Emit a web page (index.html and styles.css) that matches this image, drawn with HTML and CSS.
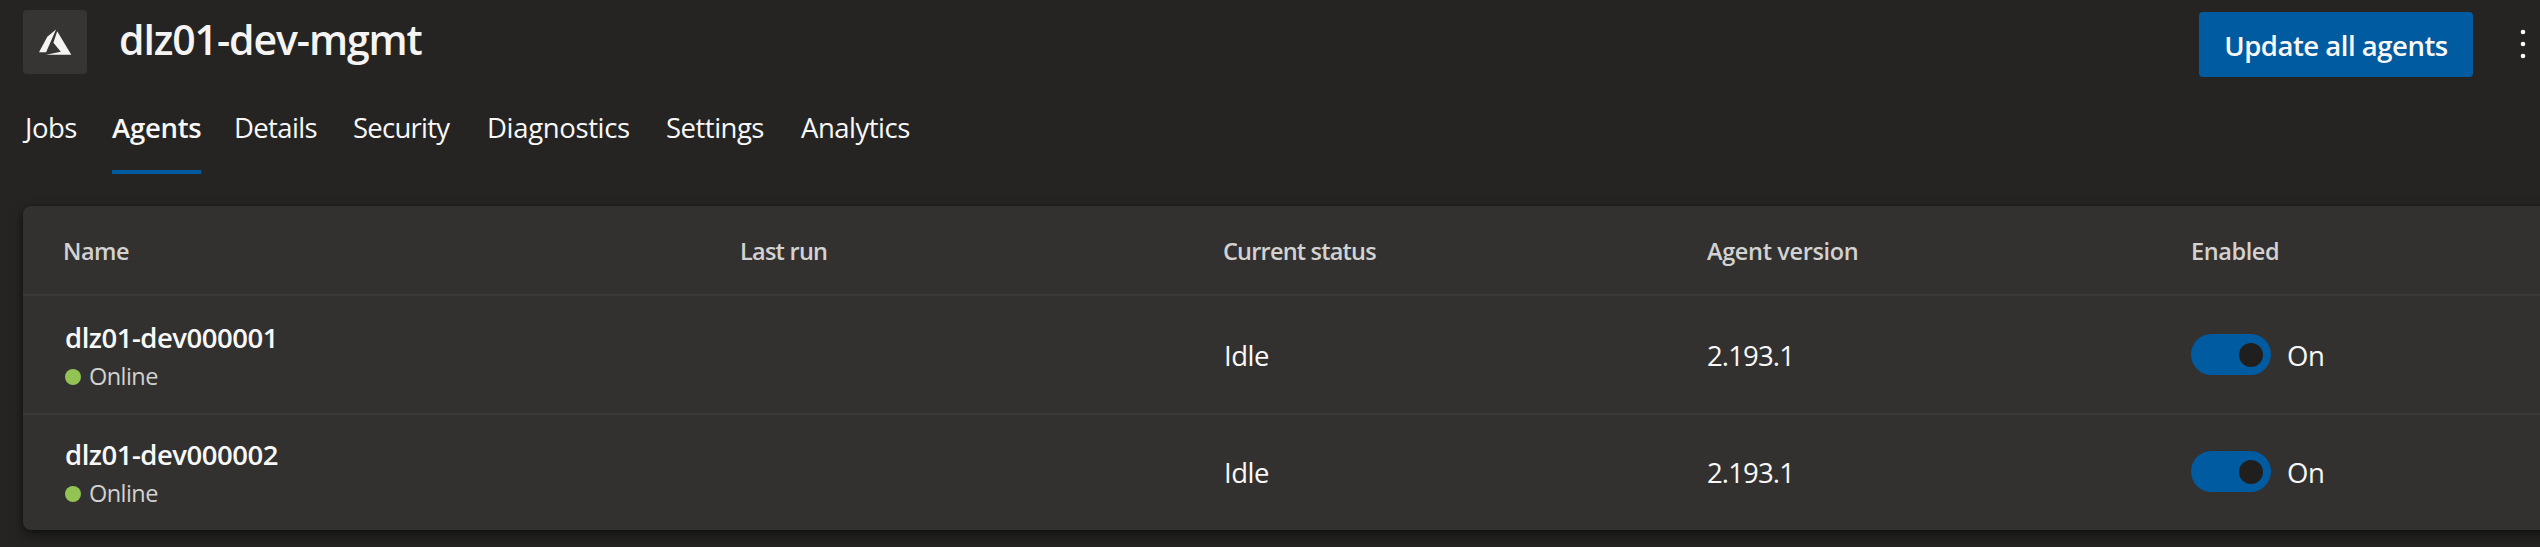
FILE: index.html
```
<!DOCTYPE html>
<html lang="en">
<head>
<meta charset="utf-8">
<title>dlz01-dev-mgmt - Agents</title>
<link rel="stylesheet" href="styles.css">
</head>
<body>
<div class="page">
  <header class="header">
    <div class="pool-icon">
      <svg width="34" height="27" viewBox="0 0 34 27" aria-hidden="true">
        <path fill="#f5f4f3" d="M18 .5 9.3 7.7 1 23.2h7.1z"/>
        <path fill="#f5f4f3" d="m19.2 2.3-3.8 11.5 7.4 9L8 25.7h25.3z"/>
      </svg>
    </div>
    <h1 class="title">dlz01-dev-mgmt</h1>
    <button class="update" type="button">Update all agents</button>
    <button class="more" type="button" aria-label="More actions">
      <svg width="6" height="30" viewBox="0 0 6 30"><g fill="#f8f8f8"><circle cx="3" cy="3" r="2.3"/><circle cx="3" cy="15" r="2.3"/><circle cx="3" cy="27" r="2.3"/></g></svg>
    </button>
  </header>
  <nav class="tabs">
    <a class="tab tab-jobs">Jobs</a>
    <a class="tab tab-agents active">Agents</a>
    <a class="tab tab-details">Details</a>
    <a class="tab tab-security">Security</a>
    <a class="tab tab-diagnostics">Diagnostics</a>
    <a class="tab tab-settings">Settings</a>
    <a class="tab tab-analytics">Analytics</a>
  </nav>
  <main class="card">
    <div class="grid head">
      <div class="h-name">Name</div>
      <div class="h-run">Last run</div>
      <div class="h-status">Current status</div>
      <div class="h-version">Agent version</div>
      <div class="h-enabled">Enabled</div>
    </div>
    <div class="grid row">
      <div class="agent">
        <div class="agent-name">dlz01-dev000001</div>
        <div class="agent-state"><span class="dot"></span><span>Online</span></div>
      </div>
      <div></div>
      <div class="value">Idle</div>
      <div class="value version">2.193.1</div>
      <div class="enabled"><span class="toggle"><span class="knob"></span></span><span class="value">On</span></div>
    </div>
    <div class="grid row last">
      <div class="agent">
        <div class="agent-name">dlz01-dev000002</div>
        <div class="agent-state"><span class="dot"></span><span>Online</span></div>
      </div>
      <div></div>
      <div class="value">Idle</div>
      <div class="value version">2.193.1</div>
      <div class="enabled"><span class="toggle"><span class="knob"></span></span><span class="value">On</span></div>
    </div>
  </main>
</div>
</body>
</html>
```
FILE: styles.css
```
* { box-sizing: border-box; }

body {
  margin: 0;
  background: #252423;
  color: #f8f8f8;
  font-family: "Open Sans", "Noto Sans", sans-serif;
  font-size: 27.5px;
}

.page {
  height: 547px;
  overflow: hidden;
  padding-left: 23px;
}

.header {
  display: flex;
  align-items: flex-start;
  height: 100px;
  padding-top: 10px;
}

.pool-icon {
  display: flex;
  width: 64px;
  height: 64px;
  padding: 19px 0 0 15px;
  border-radius: 4px;
  background: #363534;
}

.title {
  flex: 1;
  margin: 0 0 0 32px;
  font-size: 41px;
  font-weight: 600;
  line-height: 58px;
  letter-spacing: -1.1px;
  color: #f5f4f3;
}

.update {
  width: 274px;
  height: 65px;
  margin-top: 2px;
  padding: 2px 0 0;
  border: 0;
  border-radius: 4px;
  background: #005ba1;
  color: #f8f8f8;
  font: 600 27.5px/63px "Open Sans", "Noto Sans", sans-serif;
  letter-spacing: -0.48px;
}

.more {
  display: flex;
  width: 6px;
  margin: 19px 14px 0 47px;
  padding: 0;
  border: 0;
  background: none;
}

.tabs {
  display: grid;
  grid-template-columns: 89px 122px 119px 133px 179px 136px 140px;
  justify-items: start;
  height: 106px;
  line-height: 56px;
}

.tab { height: 74px; white-space: nowrap; }
.tab-jobs { padding-left: 2px; letter-spacing: -0.5px; }
.tab-agents { width: 89px; letter-spacing: -0.25px; }
.tab-details { letter-spacing: -0.65px; }
.tab-security { letter-spacing: -0.75px; }
.tab-diagnostics { padding-left: 1px; letter-spacing: -0.35px; }
.tab-settings { padding-left: 1px; letter-spacing: -0.5px; }
.tab-analytics { letter-spacing: -0.5px; }
.tab.active { border-bottom: 4px solid #005ba1; font-weight: 600; }

.card {
  height: 324px;
  margin-right: -20px;
  border-radius: 8px;
  background: #323130;
  box-shadow: 0 6px 14px rgba(0, 0, 0, 0.4), 0 1px 4px rgba(0, 0, 0, 0.35);
}

.grid {
  display: grid;
  grid-template-columns: 677px 483px 484px 483px 1fr;
  padding-left: 41px;
  white-space: nowrap;
}

.head {
  height: 88px;
  padding-top: 1px;
  color: #d3d2d1;
  font-size: 23.5px;
  font-weight: 600;
  line-height: 88px;
}

.h-name { letter-spacing: -0.5px; margin-left: -1px; }
.h-run { letter-spacing: -0.75px; margin-left: -1px; }
.h-status { letter-spacing: -0.8px; margin-left: -1px; }
.h-version { letter-spacing: -0.35px; margin-left: -1px; }
.h-enabled { letter-spacing: -0.4px; }

.row {
  height: 119px;
  padding-top: 20px;
  border-top: 2px solid #3b3a39;
}

.row.last { height: 117px; padding-top: 18px; }

.agent-name {
  height: 42px;
  padding-left: 1px;
  font-weight: 600;
  line-height: 44px;
  letter-spacing: -0.48px;
}

.agent-state {
  display: flex;
  align-items: center;
  gap: 8px;
  height: 36px;
  padding-left: 1px;
  color: #d3d2d1;
  font-size: 23.5px;
  letter-spacing: -0.55px;
}

.dot {
  width: 16px;
  height: 16px;
  margin-top: 2px;
  border-radius: 50%;
  background: #92c353;
}

.value { height: 78px; line-height: 80px; letter-spacing: -0.5px; }
.version { margin-left: -1px; letter-spacing: -0.85px; }

.enabled { display: flex; gap: 16px; }

.toggle {
  display: flex;
  justify-content: flex-end;
  width: 80px;
  height: 41px;
  margin-top: 18px;
  padding: 9px 8px;
  border-radius: 21px;
  background: #005ba1;
}

.knob {
  width: 24px;
  height: 24px;
  border-radius: 50%;
  background: #201f1e;
}
```
